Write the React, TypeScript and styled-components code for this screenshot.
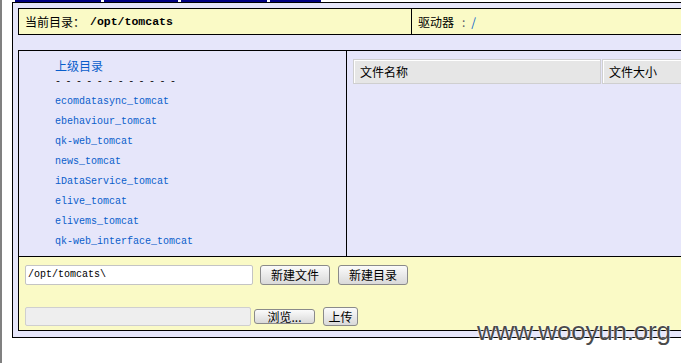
import React from "react";
import styled, { createGlobalStyle } from "styled-components";

const GlobalStyle = createGlobalStyle`
    html, body {
        margin: 0;
        padding: 0;
        background: #fff;
    }
    body {
        font-family: "Noto Sans CJK SC", "Liberation Sans", sans-serif;
        font-size: 12px;
        color: #000;
    }
`;

const Frame = styled.div`
    position: relative;
    width: 681px;
    height: 363px;
    overflow: hidden;
    box-sizing: border-box;
    border-left: 2px solid #808080;
    padding-left: 10px;
`;

const Tabs = styled.div`
    display: flex;
    gap: 3px;
    height: 2px;
    padding-left: 3px;
`;

const Tab = styled.div<{ $w: number }>`
    width: ${(p) => p.$w}px;
    height: 2px;
    background: #000080;
`;

const Outer = styled.div`
    width: 720px;
    border: 1px solid #000;
    background: #e6e6fa;
    padding: 5px 0 6px 5px;
`;

const HeaderRow = styled.div`
    display: flex;
    height: 25px;
    border: 1px solid #000;
    background: #fafac6;
`;

const HeaderCell = styled.div<{ $w?: number; $divider?: boolean }>`
    display: flex;
    align-items: center;
    box-sizing: border-box;
    width: ${(p) => (p.$w ? `${p.$w}px` : "auto")};
    flex: ${(p) => (p.$w ? "none" : "1")};
    padding-left: 6px;
    border-left: ${(p) => (p.$divider ? "1px solid #000" : "none")};
    line-height: 25px;
`;

const CurrentPath = styled.span`
    margin-left: 5px;
    font-family: "Liberation Mono", monospace;
    font-weight: bold;
    font-size: 11.5px;
`;

const Colon = styled.span`
    margin: 0 6px 0 8px;
    color: #556;
`;

const DriveLink = styled.span`
    color: #0a5ecb;
`;

const MainBox = styled.div`
    margin-top: 15px;
    border: 1px solid #000;
`;

const Panels = styled.div`
    display: flex;
    height: 205px;
`;

const DirPanel = styled.div`
    width: 328px;
    flex: none;
    box-sizing: border-box;
    border-right: 1px solid #000;
    padding: 6px 0 0 36px;
`;

const ParentLink = styled.div`
    color: #0a5ecb;
    font-size: 12px;
    line-height: 18px;
`;

const Dashes = styled.div`
    margin-top: 2px;
    font-family: "Liberation Mono", monospace;
    font-size: 10px;
    line-height: 10px;
    letter-spacing: 4.45px;
    color: #111;
`;

const DirList = styled.ul`
    list-style: none;
    margin: 5px 0 0;
    padding: 0;
`;

const DirItem = styled.li`
    font-family: "Liberation Mono", monospace;
    font-size: 10px;
    line-height: 20px;
    color: #0a5ecb;
`;

const FilePanel = styled.div`
    flex: 1;
    padding: 8px 0 0 6px;
`;

const FileHead = styled.div`
    display: flex;
    gap: 1px;
`;

const HeadCell = styled.div<{ $w?: number }>`
    width: ${(p) => (p.$w ? `${p.$w}px` : "auto")};
    flex: ${(p) => (p.$w ? "none" : "1")};
    height: 23px;
    line-height: 23px;
    padding-left: 6px;
    box-sizing: content-box;
    background: #e6e6e6;
    border: 1px solid #cfcfcf;
    box-shadow: inset 1px 1px 0 #fff;
`;

const Tools = styled.div`
    height: 74px;
    border-top: 1px solid #000;
    background: #fafac6;
    padding: 7px 0 0 6px;
    box-sizing: border-box;
`;

const ToolRow = styled.div<{ $top?: number }>`
    display: flex;
    align-items: center;
    height: 21px;
    margin-top: ${(p) => p.$top || 0}px;
`;

const PathInput = styled.div`
    width: 224px;
    height: 18px;
    line-height: 18px;
    padding-left: 2px;
    box-sizing: content-box;
    background: #fff;
    border: 1px solid #c4c4c4;
    border-radius: 2px;
    font-family: "Liberation Mono", monospace;
    font-size: 10px;
`;

const FileInput = styled.div`
    width: 224px;
    height: 17px;
    background: #eee;
    border: 1px solid #cfcfcf;
    border-radius: 2px;
`;

const Button = styled.div<{ $w: number; $h: number; $gap: number }>`
    width: ${(p) => p.$w}px;
    height: ${(p) => p.$h}px;
    margin-left: ${(p) => p.$gap}px;
    box-sizing: border-box;
    display: flex;
    align-items: center;
    justify-content: center;
    border: 1px solid #8a8a8a;
    border-radius: 3px;
    background: linear-gradient(#fbfbfb, #d9d9d9);
    font-size: 12px;
    line-height: 12px;
    color: #000;
    white-space: nowrap;
`;

const Watermark = styled.div`
    position: absolute;
    left: 475px;
    top: 318px;
    font-family: "Liberation Sans", Arial, sans-serif;
    font-size: 26px;
    line-height: 26px;
    color: #4a4a4a;
    text-shadow: 0 0 2px #fff, 0 0 1px #fff;
    letter-spacing: -0.2px;
`;

const dirs = [
    "ecomdatasync_tomcat",
    "ebehaviour_tomcat",
    "qk-web_tomcat",
    "news_tomcat",
    "iDataService_tomcat",
    "elive_tomcat",
    "elivems_tomcat",
    "qk-web_interface_tomcat",
];

const App = () => {
    return (
        <Frame>
            <GlobalStyle />
            <Tabs>
                <Tab $w={86} />
                <Tab $w={74} />
                <Tab $w={86} />
                <Tab $w={51} />
            </Tabs>
            <Outer>
                <HeaderRow>
                    <HeaderCell $w={392}>
                        当前目录：<CurrentPath>/opt/tomcats</CurrentPath>
                    </HeaderCell>
                    <HeaderCell $divider>
                        驱动器<Colon>:</Colon>
                        <DriveLink>/</DriveLink>
                    </HeaderCell>
                </HeaderRow>
                <MainBox>
                    <Panels>
                        <DirPanel>
                            <ParentLink>上级目录</ParentLink>
                            <Dashes>------------</Dashes>
                            <DirList>
                                {dirs.map((d) => (
                                    <DirItem key={d}>{d}</DirItem>
                                ))}
                            </DirList>
                        </DirPanel>
                        <FilePanel>
                            <FileHead>
                                <HeadCell $w={240}>文件名称</HeadCell>
                                <HeadCell>文件大小</HeadCell>
                            </FileHead>
                        </FilePanel>
                    </Panels>
                    <Tools>
                        <ToolRow>
                            <PathInput>/opt/tomcats\</PathInput>
                            <Button $w={70} $h={20} $gap={7}>新建文件</Button>
                            <Button $w={70} $h={20} $gap={8}>新建目录</Button>
                        </ToolRow>
                        <ToolRow $top={21}>
                            <FileInput />
                            <Button $w={61} $h={15} $gap={3}>浏览...</Button>
                            <Button $w={35} $h={19} $gap={8}>上传</Button>
                        </ToolRow>
                    </Tools>
                </MainBox>
            </Outer>
            <Watermark>www.wooyun.org</Watermark>
        </Frame>
    );
};

export default App;
